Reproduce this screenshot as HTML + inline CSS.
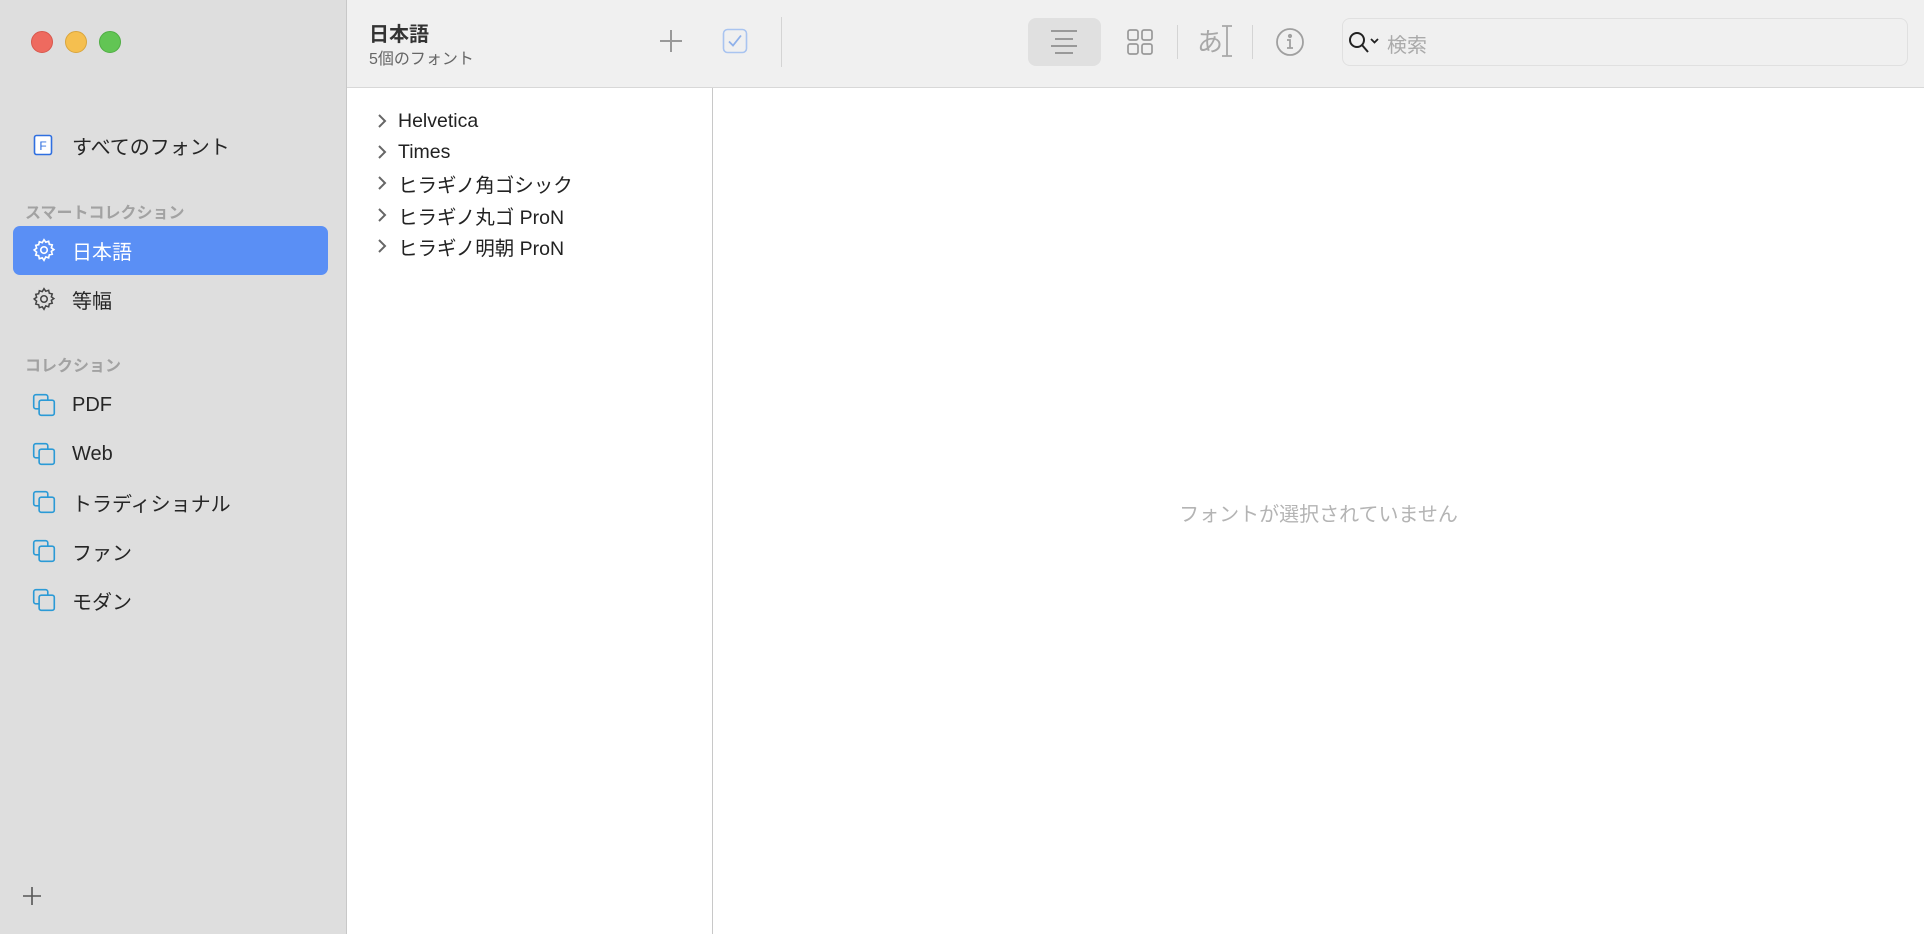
<!DOCTYPE html>
<html><head><meta charset="utf-8"><style>
*{margin:0;padding:0;box-sizing:border-box}
body{width:1924px;height:934px;overflow:hidden;font-family:"Liberation Sans","Noto Sans CJK JP",sans-serif;background:#fff;position:relative;color:#222}
.a{position:absolute}
#side{left:0;top:0;width:347px;height:934px;background:#dedede;border-right:1px solid #c8c8c8}
#tb{left:347px;top:0;width:1577px;height:88px;background:#f0f0f0;border-bottom:1px solid #d8d8d8}
.dot{width:22px;height:22px;border-radius:50%;top:31px}
.it{left:0;width:347px;height:48px;display:flex;align-items:center;font-size:20px;color:#262626}
.it svg{position:absolute;left:31px}
.it span{position:absolute;left:72px}
.hd{left:25px;font-size:16px;color:#a2a2a2;font-weight:bold}
.row{left:376px;font-size:19.5px;color:#222;height:30px;display:flex;align-items:center}
.row svg{margin-right:10px}
</style></head><body>
<div id="side" class="a">
<div class="a dot" style="left:31px;background:#ee6a5f;border:1px solid #d8574c"></div>
<div class="a dot" style="left:65px;background:#f5bf4f;border:1px solid #d9a53c"></div>
<div class="a dot" style="left:99px;background:#62c554;border:1px solid #4fae43"></div>

<div class="a it" style="top:121px"><svg width="24" height="24" viewBox="0 0 24 24"><rect x="3.5" y="2.5" width="17" height="19" rx="2" fill="#fff" stroke="#2f6fe0" stroke-width="1.6"/><text x="12" y="17" text-anchor="middle" font-size="12" fill="#2f6fe0" font-family="Liberation Sans">F</text></svg><span>すべてのフォント</span></div>
<div class="a hd" style="top:199px">スマートコレクション</div>
<div class="a" style="left:13px;top:226px;width:315px;height:49px;background:#5a8ff5;border-radius:7px"></div>
<div class="a it" style="top:226px;color:#fff"><svg width="26" height="26" viewBox="0 0 24 24" fill="none" stroke="#fff" stroke-width="1.5"><circle cx="12" cy="12" r="3"/><path d="M12 2.5l1.6 2.3 2.7-.8.6 2.7 2.7.6-.8 2.7 2.3 1.6-2.3 1.6.8 2.7-2.7.6-.6 2.7-2.7-.8L12 21.5l-1.6-2.3-2.7.8-.6-2.7-2.7-.6.8-2.7L2.9 12l2.3-1.6-.8-2.7 2.7-.6.6-2.7 2.7.8z"/></svg><span style="color:#fff">日本語</span></div>
<div class="a it" style="top:275px"><svg width="26" height="26" viewBox="0 0 24 24" fill="none" stroke="#444" stroke-width="1.4"><circle cx="12" cy="12" r="3"/><path d="M12 2.5l1.6 2.3 2.7-.8.6 2.7 2.7.6-.8 2.7 2.3 1.6-2.3 1.6.8 2.7-2.7.6-.6 2.7-2.7-.8L12 21.5l-1.6-2.3-2.7.8-.6-2.7-2.7-.6.8-2.7L2.9 12l2.3-1.6-.8-2.7 2.7-.6.6-2.7 2.7.8z"/></svg><span>等幅</span></div>
<div class="a hd" style="top:352px">コレクション</div>
<div class="a it" style="top:381px"><svg width="26" height="26" viewBox="0 0 24 24" fill="none" stroke="#2b9ad6" stroke-width="1.5"><rect x="2.5" y="2.5" width="13" height="13" rx="2"/><rect x="7.5" y="7.5" width="14" height="14" rx="2" fill="#dedede"/></svg><span>PDF</span></div>
<div class="a it" style="top:430px"><svg width="26" height="26" viewBox="0 0 24 24" fill="none" stroke="#2b9ad6" stroke-width="1.5"><rect x="2.5" y="2.5" width="13" height="13" rx="2"/><rect x="7.5" y="7.5" width="14" height="14" rx="2" fill="#dedede"/></svg><span>Web</span></div>
<div class="a it" style="top:478px"><svg width="26" height="26" viewBox="0 0 24 24" fill="none" stroke="#2b9ad6" stroke-width="1.5"><rect x="2.5" y="2.5" width="13" height="13" rx="2"/><rect x="7.5" y="7.5" width="14" height="14" rx="2" fill="#dedede"/></svg><span>トラディショナル</span></div>
<div class="a it" style="top:527px"><svg width="26" height="26" viewBox="0 0 24 24" fill="none" stroke="#2b9ad6" stroke-width="1.5"><rect x="2.5" y="2.5" width="13" height="13" rx="2"/><rect x="7.5" y="7.5" width="14" height="14" rx="2" fill="#dedede"/></svg><span>ファン</span></div>
<div class="a it" style="top:576px"><svg width="26" height="26" viewBox="0 0 24 24" fill="none" stroke="#2b9ad6" stroke-width="1.5"><rect x="2.5" y="2.5" width="13" height="13" rx="2"/><rect x="7.5" y="7.5" width="14" height="14" rx="2" fill="#dedede"/></svg><span>モダン</span></div>
<svg class="a" style="left:21px;top:885px" width="22" height="22" viewBox="0 0 22 22" stroke="#555" stroke-width="1.6"><path d="M11 2v18M2 11h18"/></svg>
</div>

<div id="tb" class="a">
<div class="a" style="left:22px;top:18px;font-size:20px;font-weight:bold;color:#333">日本語</div>
<div class="a" style="left:22px;top:45px;font-size:16px;color:#666">5個のフォント</div>
<svg class="a" style="left:311px;top:28px" width="26" height="26" viewBox="0 0 26 26" stroke="#999" stroke-width="2"><path d="M13 2v22M2 13h22"/></svg>
<svg class="a" style="left:375px;top:28px" width="26" height="26" viewBox="0 0 26 26" fill="none"><rect x="1.5" y="1.5" width="23" height="23" rx="4" stroke="#a9c4f0" stroke-width="1.6"/><path d="M7 13.5l4 4 8-10" stroke="#8fb1ea" stroke-width="1.8"/></svg>
<div class="a" style="left:434px;top:17px;width:1px;height:50px;background:#d4d4d4"></div>
<div class="a" style="left:681px;top:18px;width:73px;height:48px;background:#e0e0e0;border-radius:8px"></div>
<svg class="a" style="left:702px;top:28px" width="30" height="28" viewBox="0 0 30 28" stroke="#999" stroke-width="2"><path d="M2 3h26M6 11h18M2 18h26M6 25h18"/></svg>
<svg class="a" style="left:780px;top:29px" width="26" height="26" viewBox="0 0 26 26" fill="none" stroke="#999" stroke-width="1.7"><rect x="1" y="1" width="10" height="10" rx="2"/><rect x="15" y="1" width="10" height="10" rx="2"/><rect x="1" y="15" width="10" height="10" rx="2"/><rect x="15" y="15" width="10" height="10" rx="2"/></svg>
<div class="a" style="left:830px;top:25px;width:1px;height:34px;background:#d4d4d4"></div>
<div class="a" style="left:850px;top:22px;font-size:26px;color:#a8a8a8">あ</div>
<svg class="a" style="left:874px;top:24px" width="12" height="34" viewBox="0 0 12 34" stroke="#a8a8a8" stroke-width="1.8"><path d="M1 2h10M6 2v30M1 32h10"/></svg>
<div class="a" style="left:905px;top:25px;width:1px;height:34px;background:#d4d4d4"></div>
<svg class="a" style="left:928px;top:27px" width="30" height="30" viewBox="0 0 30 30" fill="none" stroke="#a0a0a0" stroke-width="1.8"><circle cx="15" cy="15" r="13"/><circle cx="15" cy="9" r="1.2" fill="#a0a0a0"/><path d="M12 13h3v8M12 21h6"/></svg>
<div class="a" style="left:995px;top:18px;width:566px;height:48px;border:1.5px solid #e0e0e0;border-radius:8px;background:#f0f0f0"></div>
<svg class="a" style="left:1000px;top:30px" width="34" height="26" viewBox="0 0 34 26" fill="none" stroke="#222" stroke-width="2"><circle cx="10" cy="10" r="7"/><path d="M15 15l6 7"/><path d="M24 9l3.5 3.5L31 9" stroke-width="1.8"/></svg>
<div class="a" style="left:1040px;top:29px;font-size:20px;color:#aaa">検索</div>
</div>

<div class="a" style="left:712px;top:88px;width:1px;height:846px;background:#c8c8c8"></div>

<div class="a row" style="top:106px"><svg width="12" height="16" viewBox="0 0 12 16" fill="none" stroke="#666" stroke-width="2"><path d="M3 2l6 6-6 6"/></svg>Helvetica</div>
<div class="a row" style="top:137px"><svg width="12" height="16" viewBox="0 0 12 16" fill="none" stroke="#666" stroke-width="2"><path d="M3 2l6 6-6 6"/></svg>Times</div>
<div class="a row" style="top:168px"><svg width="12" height="16" viewBox="0 0 12 16" fill="none" stroke="#666" stroke-width="2"><path d="M3 2l6 6-6 6"/></svg>ヒラギノ角ゴシック</div>
<div class="a row" style="top:200px"><svg width="12" height="16" viewBox="0 0 12 16" fill="none" stroke="#666" stroke-width="2"><path d="M3 2l6 6-6 6"/></svg>ヒラギノ丸ゴ ProN</div>
<div class="a row" style="top:231px"><svg width="12" height="16" viewBox="0 0 12 16" fill="none" stroke="#666" stroke-width="2"><path d="M3 2l6 6-6 6"/></svg>ヒラギノ明朝 ProN</div>

<div class="a" style="left:713px;width:1211px;top:498px;text-align:center;font-size:20px;color:#b4b4b4">フォントが選択されていません</div>
</body></html>
